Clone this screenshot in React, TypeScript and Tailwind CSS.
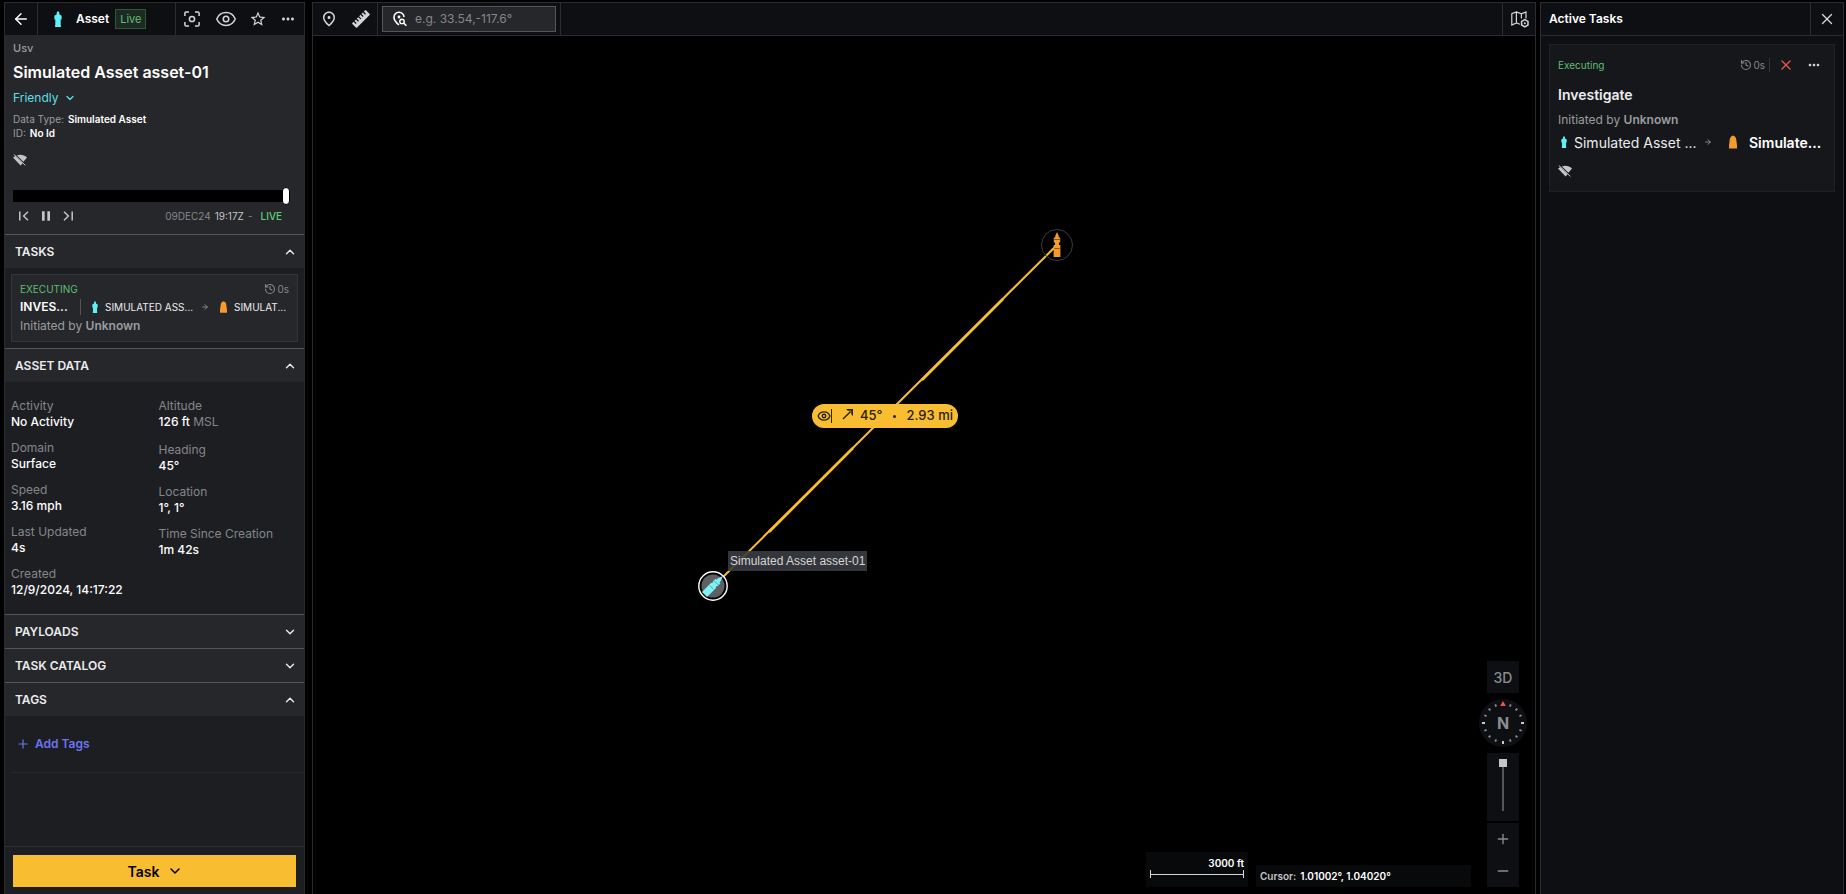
import React, { useState } from 'react';
import {
  ArrowLeft,
  ArrowRight,
  ChevronDown,
  ChevronUp,
  Eye,
  History,
  Minus,
  Plus,
  X,
} from 'lucide-react';
import {
  MdMoreHoriz,
  MdOutlinePlace,
  MdStarBorder,
  MdPause,
} from 'react-icons/md';

type IconProps = { className?: string };

const VesselIcon = ({ className }: IconProps) => (
  <svg viewBox="0 0 8 16" className={className} fill="currentColor" aria-hidden="true">
    <path d="M4 0 5.3 1.6V3.2L7.6 4.8V8.6H6.7V14H6.9V16H1.1V14H1.3V8.6H.4V4.8L2.7 3.2V1.6Z" />
  </svg>
);

const TargetHullIcon = ({ className }: IconProps) => (
  <svg viewBox="0 0 8 13" className={className} fill="currentColor" aria-hidden="true">
    <path d="M4 0C5.6.4 6.8 1.6 7.2 3.8L8 10V13H0V10L.8 3.8C1.2 1.6 2.4.4 4 0Z" />
  </svg>
);

const SignalOffIcon = ({ className }: IconProps) => (
  <svg viewBox="0 0 14 12" className={className} aria-hidden="true">
    <path d="M3.9 1.4C7.4 0 11.2.9 14 3.4L10.4 7.8Z" fill="currentColor" />
    <path d="M2.4 2.1 9.6 9.2 7.6 11.4 0 3.4Z" fill="currentColor" />
    <path d="M.8.4 12.4 11.4" stroke="currentColor" strokeWidth="1" />
  </svg>
);

const FocusIcon = ({ className }: IconProps) => (
  <svg viewBox="0 0 16 16" className={className} fill="none" stroke="currentColor" strokeWidth="1.5" aria-hidden="true">
    <path d="M.9 5V2.2C.9 1.4 1.4.9 2.2.9H5M11 .9h2.8c.8 0 1.3.5 1.3 1.3V5M15.1 11v2.8c0 .8-.5 1.3-1.3 1.3H11M5 15.1H2.2c-.8 0-1.3-.5-1.3-1.3V11" />
    <circle cx="8" cy="8" r="2.6" />
  </svg>
);

const RulerIcon = ({ className }: IconProps) => (
  <svg viewBox="0 0 18 18" className={className} aria-hidden="true">
    <g transform="rotate(-45 9 9)">
      <rect x="-.6" y="5.8" width="19.2" height="6.4" rx=".6" fill="currentColor" />
      <path d="M2.4 5V8.8M5.7 5V8.8M9 5V8.8M12.3 5V8.8M15.6 5V8.8" stroke="#0e0f13" strokeWidth="1.3" />
    </g>
  </svg>
);

const PinSearchIcon = ({ className }: IconProps) => (
  <svg viewBox="0 0 14 16" className={className} fill="none" stroke="currentColor" strokeWidth="1.6" aria-hidden="true">
    <path d="M6 14C3.4 11.8 1 9.2 1 6.4A5 5 0 0 1 11 6" />
    <circle cx="6" cy="6" r="1.4" fill="currentColor" stroke="none" />
    <circle cx="9" cy="10.4" r="2.2" strokeWidth="1.4" />
    <path d="M10.6 12 13.4 14.8" />
  </svg>
);

const MapSettingsIcon = ({ className }: IconProps) => (
  <svg viewBox="0 0 18 17" className={className} fill="none" stroke="currentColor" strokeWidth="1.2" aria-hidden="true">
    <path d="M9 13.2 5.4 12 .8 14V2.6L5.4.9 10.4 2.8 15 1V7.4M5.4.9V12M10.4 2.8V7.6" />
    <path d="M13.8 8.6 17 10.4V14L13.8 15.9 10.6 14V10.4Z" strokeWidth="1.5" />
    <circle cx="13.8" cy="12.2" r="1" fill="currentColor" stroke="none" />
  </svg>
);

const BearingIcon = ({ className }: IconProps) => (
  <svg viewBox="0 0 12 12" className={className} aria-hidden="true">
    <path d="M1 11 8.6 3.4" stroke="currentColor" strokeWidth="1.4" />
    <path d="M4 1H11V8L9.2 6.2V2.8H5.8Z" fill="currentColor" />
  </svg>
);

const Compass = () => (
  <svg viewBox="0 0 48 48" className="size-12" aria-hidden="true">
    <circle cx="24" cy="24" r="24" fill="#0e0f13" />
    {Array.from({ length: 15 }, (_, i) => i + 1).map((i) => (
      <path
        key={i}
        d={i % 4 === 0 ? 'M24 3V6' : 'M24 3.8V6.2'}
        stroke={i % 4 === 0 ? '#c9cacc' : '#8b8c90'}
        strokeWidth={i % 4 === 0 ? 2 : 1.8}
        transform={`rotate(${i * 22.5} 24 24)`}
      />
    ))}
    <path d="M24 2 26.8 7H21.2Z" fill="#e5564b" />
  </svg>
);

const Section = ({
  title,
  initiallyOpen = false,
  children,
}: {
  title: string;
  initiallyOpen?: boolean;
  children?: React.ReactNode;
}) => {
  const [open, setOpen] = useState(initiallyOpen);
  const Chevron = open ? ChevronUp : ChevronDown;
  return (
    <section>
      <button
        type="button"
        aria-expanded={open}
        onClick={() => setOpen(!open)}
        className="flex h-[34px] w-full items-center justify-between border-t border-[#55565a] bg-[#26272b] pr-[7px] pl-2.5 text-[12px] font-semibold text-[#ececed]"
      >
        {title}
        <Chevron className="size-3.5" strokeWidth={2.4} />
      </button>
      {open && children}
    </section>
  );
};

const Datum = ({ label, value, unit }: { label: string; value: string; unit?: string }) => (
  <div className={unit ? 'pb-0.5' : ''}>
    <dt className="text-[#85868a]">{label}</dt>
    <dd className="font-medium text-white">
      {value}
      {unit && <span className="font-normal text-[#85868a]"> {unit}</span>}
    </dd>
  </div>
);

const AssetPanel = () => (
  <aside className="flex w-[301px] shrink-0 flex-col border-x border-t border-[#2b2c30] bg-[#1d1e22]">
    <header className="flex h-8 shrink-0 items-stretch bg-[#0e0f13] text-[#d4d5d7]">
      <button type="button" aria-label="Back" className="flex w-[33px] items-center justify-center border-r border-[#2b2c30] text-white">
        <ArrowLeft className="size-[18px]" strokeWidth={2} />
      </button>
      <div className="flex flex-1 items-center pl-4">
        <VesselIcon className="h-4 w-2 text-[#5ef1f5]" />
        <h2 className="ml-[14px] text-[12px] font-semibold text-white">Asset</h2>
        <span className="ml-1.5 border border-[#2c5a38] bg-[#1c2a22] px-1 text-[11px] leading-[18px] text-[#5fbf75]">Live</span>
      </div>
      <div className="flex w-[129px] items-center gap-3 border-l border-[#2b2c30] pl-2">
        <button type="button" aria-label="Focus" className="mr-[3px]"><FocusIcon className="size-4" /></button>
        <button type="button" aria-label="Watch"><Eye className="size-[22px]" strokeWidth={1.7} /></button>
        <button type="button" aria-label="Favorite"><MdStarBorder className="size-[18px]" /></button>
        <button type="button" aria-label="More"><MdMoreHoriz className="size-[18px]" /></button>
      </div>
    </header>

    <div className="shrink-0 bg-[#26272b] px-2 pt-1.5">
      <p className="text-[11px] leading-[14px] font-medium text-[#9b9c9f]">Usv</p>
      <h1 className="mt-1.5 text-[16px] leading-[22px] font-semibold text-white">Simulated Asset asset-01</h1>
      <button type="button" className="mt-1.5 flex items-center gap-[5px] text-[12px] leading-[18px] text-[#5edfe4]">
        Friendly
        <ChevronDown className="size-3" strokeWidth={2.6} />
      </button>
      <dl className="mt-[5px] text-[10px] leading-[14px]">
        <div className="flex gap-1">
          <dt className="text-[#9b9c9f]">Data Type:</dt>
          <dd className="font-semibold text-white">Simulated Asset</dd>
        </div>
        <div className="flex gap-1">
          <dt className="text-[#9b9c9f]">ID:</dt>
          <dd className="font-semibold text-white">No Id</dd>
        </div>
      </dl>
      <SignalOffIcon className="mt-3.5 h-3 w-[14px] text-[#c4c5c7]" />
      <div className="mt-[21px] mr-1.5 flex h-[18px] items-center">
        <input
          type="range"
          aria-label="Timeline"
          min={0}
          max={100}
          defaultValue={100}
          className="h-[18px] w-full appearance-none bg-transparent [&::-webkit-slider-runnable-track]:h-3 [&::-webkit-slider-runnable-track]:bg-black [&::-webkit-slider-thumb]:-mt-[3px] [&::-webkit-slider-thumb]:h-[18px] [&::-webkit-slider-thumb]:w-2 [&::-webkit-slider-thumb]:appearance-none [&::-webkit-slider-thumb]:rounded-sm [&::-webkit-slider-thumb]:border [&::-webkit-slider-thumb]:border-black [&::-webkit-slider-thumb]:bg-white"
        />
      </div>
      <div className="flex h-[29px] items-center pb-[7px] text-[#c4c5c7]">
        <div className="flex flex-1 items-center gap-1 pl-px">
          <button type="button" aria-label="Skip to start">
            <svg viewBox="0 0 10 10" className="mx-[5px] size-2.5" fill="none" stroke="currentColor" strokeWidth="1.5"><path d="M.8.4V9.6M9 .8 4.6 5 9 9.2" /></svg>
          </button>
          <button type="button" aria-label="Pause"><MdPause className="size-4" /></button>
          <button type="button" aria-label="Skip to end">
            <svg viewBox="0 0 10 10" className="mx-[5px] size-2.5" fill="none" stroke="currentColor" strokeWidth="1.5"><path d="M9.2.4V9.6M1 .8 5.4 5 1 9.2" /></svg>
          </button>
        </div>
        <p className="mr-3.5 flex gap-1 text-[10px] text-[#85868a]">
          09DEC24 <span className="text-[#c4c5c7]">19:17Z</span> -
          <span className="ml-1 font-medium text-[#5fd07a]">LIVE</span>
        </p>
      </div>
    </div>

    <Section title="TASKS" initiallyOpen>
      <div className="p-1.5">
        <article className="border border-[#34353a] bg-[#26272b] px-2 py-[7px]">
          <div className="flex items-center justify-between text-[10px] leading-[14px]">
            <span className="text-[#5fbf75]">EXECUTING</span>
            <span className="flex items-center gap-px text-[#85868a]">
              <History className="size-3" strokeWidth={2.2} />0s
            </span>
          </div>
          <div className="flex h-[22px] items-center text-[10px] whitespace-nowrap text-[#ececed]">
            <h3 className="w-12 text-[12px] font-semibold text-white">INVES...</h3>
            <span className="ml-3 h-4 w-px bg-[#55565a]" />
            <VesselIcon className="ml-[11px] h-3 w-1.5 shrink-0 text-[#5ef1f5]" />
            <span className="ml-[7px] w-[90px]">SIMULATED ASS...</span>
            <ArrowRight className="ml-1.5 size-2 shrink-0 text-[#85868a]" strokeWidth={3} />
            <TargetHullIcon className="ml-[11px] h-3 w-[7px] shrink-0 text-[#f59a2d]" />
            <span className="ml-[7px]">SIMULAT...</span>
          </div>
          <p className="text-[12px] leading-4 text-[#9b9c9f]">
            Initiated by <b className="font-semibold">Unknown</b>
          </p>
        </article>
      </div>
    </Section>

    <Section title="ASSET DATA" initiallyOpen>
      <dl className="grid grid-cols-2 px-1.5 py-4 text-[12px] leading-4">
        <div className="flex flex-col gap-2.5">
          <Datum label="Activity" value="No Activity" />
          <Datum label="Domain" value="Surface" />
          <Datum label="Speed" value="3.16 mph" />
          <Datum label="Last Updated" value="4s" />
          <Datum label="Created" value="12/9/2024, 14:17:22" />
        </div>
        <div className="flex flex-col gap-2.5 pl-1">
          <Datum label="Altitude" value="126 ft" unit="MSL" />
          <Datum label="Heading" value="45°" />
          <Datum label="Location" value="1°, 1°" />
          <Datum label="Time Since Creation" value="1m 42s" />
        </div>
      </dl>
    </Section>

    <Section title="PAYLOADS" />
    <Section title="TASK CATALOG" />
    <Section title="TAGS" initiallyOpen>
      <div className="ml-1.5 flex h-[57px] items-center border-b border-[#26272b]">
        <button type="button" className="flex items-center gap-[5px] pl-[5px] text-[12px] font-semibold text-[#6a75f0]">
          <Plus className="size-3.5" strokeWidth={2} />
          Add Tags
        </button>
      </div>
    </Section>

    <footer className="mt-auto border-t border-[#303135] px-2 pt-2 pb-[7px]">
      <button type="button" className="flex h-8 w-full items-center justify-center gap-2 bg-[#f8bd30] pl-0.5 text-[14px] font-semibold text-black">
        Task
        <ChevronDown className="size-4" strokeWidth={2.2} />
      </button>
    </footer>
  </aside>
);

const MapCanvas = () => (
  <div className="relative flex-1 overflow-hidden bg-black">
    <svg className="absolute inset-0 size-full" fill="none" aria-hidden="true">
      <path d="M744 209 401 550" stroke="#f8bd30" strokeWidth="2" />
      <path d="M690 263 609 344M540 412 456 496" stroke="#f8bd30" strokeWidth="2.6" />
      <circle cx="744" cy="209" r="15.5" stroke="#3a3b3f" />
      <g transform="translate(744 209)" fill="#f59a2d">
        <path d="M0-13 1.8-9V-7.6H3.2V-2.6H2V0H3.4V12H-3.4V0H-2V-2.6H-3.2V-7.6H-1.8V-9Z" />
        <path d="M-3.4-5.5H3.4M-2.6 3.5H2.6" stroke="#6b4310" strokeWidth=".8" />
      </g>
      <circle cx="400" cy="550" r="14.2" fill="#000" stroke="#fff" strokeWidth="1.4" />
      <circle cx="400" cy="550" r="11.5" fill="#5f6063" />
      <g transform="translate(400 550) rotate(45)" fill="#7df3f6">
        <path d="M0-14 2-9V-7H3.4V-3H2.8V-1H3.6V12H-3.6V-1H-2.8V-3H-3.4V-7H-2V-9Z" />
        <path d="M-3.2-4.5H3.2M-2.4 2H2.4" stroke="#3d9a9e" strokeWidth=".8" />
      </g>
    </svg>

    <p className="absolute top-[515px] left-[415px] bg-[#3a3c41]/90 px-0.5 font-['Liberation_Sans',sans-serif] text-[12px] leading-5 text-[#d4d5d7]">
      Simulated Asset asset-01
    </p>

    <div className="absolute top-[368px] left-[499px] flex h-6 w-[146px] items-center rounded-full bg-[#f8bd30] pr-[5px] pl-[5px] text-[13px] font-medium text-[#2a2108]">
      <Eye className="size-3.5" strokeWidth={2.4} />
      <span className="h-3.5 w-px bg-[#2a2108]" />
      <BearingIcon className="mb-1 ml-2.5 size-3" />
      <span className="ml-1.5">45°</span>
      <span className="mx-auto size-[3px] rounded-full bg-[#2a2108]" />
      <span className="whitespace-nowrap">2.93 mi</span>
    </div>

    <div className="absolute right-2 bottom-[7px] flex items-end gap-2 font-semibold">
      <div className="flex h-[35px] w-[102px] flex-col bg-[#08090b] px-1 pt-1 text-right text-[10px] leading-[14px] text-white">
        3000 ft
        <span className="flex h-2 items-center border-x border-[#d4d5d7]">
          <span className="h-px w-full bg-[#d4d5d7]" />
        </span>
      </div>
      <p className="flex h-[22px] w-[215px] items-center gap-1 bg-[#08090b] pl-1 text-[10px] text-white">
        <span className="text-[#c4c5c7]">Cursor:</span> 1.01002°, 1.04020°
      </p>
      <div className="flex flex-col items-center text-[#8b8c90]">
        <button type="button" className="size-8 bg-[#0e0f13] text-[14px] font-medium">3D</button>
        <button type="button" aria-label="Reset north" className="my-1.5 grid place-items-center">
          <span className="col-start-1 row-start-1"><Compass /></span>
          <span className="col-start-1 row-start-1 text-[16px] font-bold">N</span>
        </button>
        <div className="flex h-[68px] w-8 flex-col items-center bg-[#0e0f13] pt-1.5">
          <input
            type="range"
            aria-label="Zoom level"
            min={0}
            max={20}
            defaultValue={20}
            className="h-[52px] w-2 appearance-none bg-transparent [direction:rtl] [writing-mode:vertical-lr] [&::-webkit-slider-runnable-track]:w-0.5 [&::-webkit-slider-runnable-track]:bg-[#55565a] [&::-webkit-slider-thumb]:-ml-[3px] [&::-webkit-slider-thumb]:size-2 [&::-webkit-slider-thumb]:appearance-none [&::-webkit-slider-thumb]:bg-[#c4c5c7]"
          />
        </div>
        <div className="mt-0.5 flex h-16 w-8 flex-col bg-[#0e0f13]">
          <button type="button" aria-label="Zoom in" className="flex flex-1 items-center justify-center"><Plus className="size-4" strokeWidth={2} /></button>
          <button type="button" aria-label="Zoom out" className="flex flex-1 items-center justify-center"><Minus className="size-4" strokeWidth={2.4} /></button>
        </div>
      </div>
    </div>
  </div>
);

const MapPanel = () => (
  <main className="mr-1 ml-[7px] flex min-w-0 flex-1 flex-col border-x border-t border-[#2b2c30]">
    <div className="flex h-[33px] shrink-0 items-stretch border-b border-[#2b2c30] bg-[#0e0f13] text-[#d4d5d7]">
      <div className="flex w-[65px] items-center justify-between border-r border-[#2b2c30] pr-[7px] pl-[7px]">
        <button type="button" aria-label="Drop pin"><MdOutlinePlace className="size-[18px]" /></button>
        <button type="button" aria-label="Measure"><RulerIcon className="size-[18px]" /></button>
      </div>
      <div className="flex items-center border-r border-[#2b2c30] px-1">
        <label className="flex h-[26px] w-[174px] items-center gap-2 border border-[#55565a] bg-[#26272b] pl-2.5">
          <PinSearchIcon className="h-4 w-3.5 shrink-0 text-white" />
          <input type="text" aria-label="Go to coordinates" placeholder="e.g. 33.54,-117.6°" className="w-full bg-transparent text-[12px] text-white outline-none placeholder:text-[#85868a]" />
        </label>
      </div>
      <button type="button" aria-label="Map settings" className="ml-auto flex w-[33px] items-center justify-center border-l border-[#2b2c30] pl-0.5">
        <MapSettingsIcon className="h-[17px] w-[18px]" />
      </button>
    </div>
    <MapCanvas />
  </main>
);

const TasksPanel = () => (
  <aside className="mr-[2px] w-[304px] shrink-0 border-x border-t border-[#2b2c30] bg-[#0e0f13]">
    <header className="flex h-[33px] items-stretch border-b border-[#2b2c30]">
      <h2 className="flex flex-1 items-center pl-2 text-[12px] font-semibold text-white">Active Tasks</h2>
      <button type="button" aria-label="Close" className="flex w-[33px] items-center justify-center border-l border-[#2b2c30] text-[#d4d5d7]">
        <X className="size-[18px]" strokeWidth={1.8} />
      </button>
    </header>
    <article className="m-2 border border-[#1f2024] bg-[#16171b] px-2 pt-[11px] pb-3.5">
      <div className="flex h-[18px] items-center text-[10px]">
        <span className="flex-1 text-[#5fbf75]">Executing</span>
        <span className="flex items-center gap-px text-[#85868a]"><History className="size-3" strokeWidth={2.2} />0s</span>
        <span className="ml-1 h-3.5 w-px bg-[#34353a]" />
        <button type="button" aria-label="Cancel task" className="ml-2 text-[#e5564b]"><X className="size-4" strokeWidth={2} /></button>
        <button type="button" aria-label="More" className="mr-1 ml-3 text-[#d4d5d7]"><MdMoreHoriz className="size-4" /></button>
      </div>
      <h3 className="mt-3 text-[14px] leading-[18px] font-semibold text-[#ececed]">Investigate</h3>
      <p className="mt-2 text-[12px] leading-4 text-[#9b9c9f]">Initiated by <b className="font-semibold">Unknown</b></p>
      <div className="mt-[5px] flex h-[18px] items-center text-[14px] whitespace-nowrap text-[#ececed]">
        <VesselIcon className="ml-[3px] h-3 w-1.5 shrink-0 text-[#5ef1f5]" />
        <span className="ml-[7px] w-[120px]">Simulated Asset ...</span>
        <ArrowRight className="ml-2.5 size-2 shrink-0 text-[#85868a]" strokeWidth={3} />
        <TargetHullIcon className="ml-[17px] h-3.5 w-2 shrink-0 text-[#f59a2d]" />
        <b className="ml-3 font-semibold text-white">Simulate...</b>
      </div>
      <SignalOffIcon className="mt-3.5 h-3 w-[14px] text-[#c4c5c7]" />
    </article>
  </aside>
);

export default function App() {
  return (
    <div className="flex h-screen overflow-hidden bg-black pt-[2px] pl-1 font-['Inter',sans-serif]">
      <AssetPanel />
      <MapPanel />
      <TasksPanel />
    </div>
  );
}
